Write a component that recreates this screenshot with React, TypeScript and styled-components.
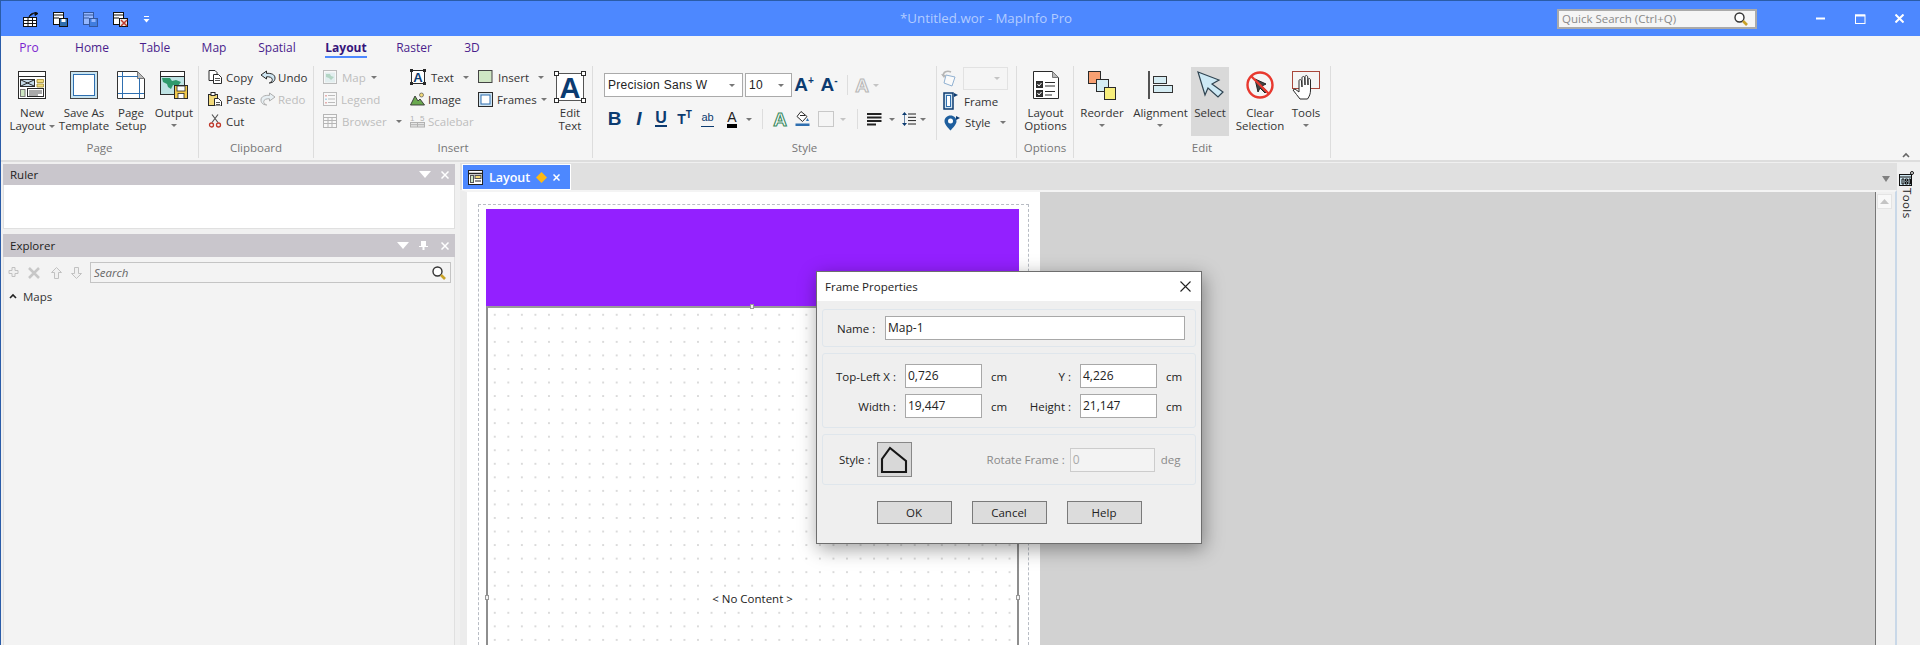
import React from "react";
import styled, { createGlobalStyle } from "styled-components";

const FONT = `"Open Sans", "Noto Sans", "Liberation Sans", sans-serif`;

const Global = createGlobalStyle`
  html, body { margin: 0; padding: 0; overflow: hidden; background: #f0f0f0; }
  #root { width: 1920px; height: 645px; }
  * { box-sizing: border-box; }
`;

const Shell = styled.div`
  position: relative; width: 1920px; height: 645px; overflow: hidden;
  display: flex; flex-direction: column; background: #f0f0f0;
  border-left: 1px solid #2a5ca8; border-top: 1px solid #2a5ca8;
  font: 11.5px/13px ${FONT}; color: #333;
`;

/* ---------- title bar ---------- */
const TitleBar = styled.div`
  height: 35px; flex: none; background: #4d88ff; display: flex; align-items: center; color: #fff;
`;
const Qat = styled.div`
  width: 899px; flex: none; display: flex; align-items: center; padding: 1px 0 0 22px; gap: 15px;
`;
const Title = styled.div`
  width: 172px; flex: none; text-align: center; color: #b3ccff; font-size: 13.3px; white-space: nowrap;
`;
const QuickSearch = styled.div`
  margin-left: 485px; width: 200px; height: 20px; border: 2px solid #aaa; background: #f5f5f5;
  display: flex; align-items: center; justify-content: space-between; padding: 0 7px 0 3px;
  color: #8a8a8a; font-size: 11.5px; white-space: nowrap;
`;
const WinControls = styled.div`
  margin-left: 59px; display: flex; align-items: center; gap: 29px;
`;

/* ---------- tabs ---------- */
const TabRow = styled.div`
  height: 24px; flex: none; background: #f5f5f5; display: flex; padding-top: 3px;
`;
const Tab = styled.div<{ $w: number }>`
  width: ${(p) => p.$w}px; display: flex; justify-content: center;
`;
const TabLabel = styled.span<{ $active?: boolean; $pro?: boolean }>`
  display: block; height: 19px; font-size: 12px; line-height: 17px;
  color: ${(p) => (p.$pro ? "#7a22cf" : p.$active ? "#35147a" : "#4a1d8c")};
  font-weight: ${(p) => (p.$active ? 700 : 400)};
  border-bottom: 2px solid ${(p) => (p.$active ? "#4d88ff" : "transparent")};
`;

/* ---------- ribbon ---------- */
const Ribbon = styled.div`
  height: 102px; flex: none; background: #f5f5f5; border-bottom: 2px solid #ddd; display: flex; align-items: flex-start; padding-top: 6px;
`;
const Group = styled.div<{ $w: number }>`
  width: ${(p) => p.$w}px; height: 92px; flex: none; border-right: 1px solid #ddd; display: flex; flex-direction: column;
`;
const GroupBody = styled.div<{ $pl?: number }>`
  height: 74px; display: flex; padding-left: ${(p) => p.$pl || 0}px;
`;
const GroupLabel = styled.div`
  height: 15px; line-height: 15px; text-align: center; color: #777; font-size: 11.5px;
`;
const Large = styled.div<{ $w: number; $on?: boolean }>`
  width: ${(p) => p.$w}px; height: 69px; margin-top: 1px; padding-top: 4px; flex: none;
  display: flex; flex-direction: column; align-items: center; text-align: center;
  background: ${(p) => (p.$on ? "#d9d9d9" : "transparent")};
  color: #333; white-space: nowrap;
`;
const IconSlot = styled.div`
  height: 30px; flex: none; display: flex; align-items: flex-start; justify-content: center;
`;
const LargeText = styled.div`
  margin-top: 5px; line-height: 13px;
`;
const Caret = styled.span<{ $ml?: number; $light?: boolean }>`
  display: inline-block; flex: none; width: 0; height: 0; vertical-align: middle;
  margin-left: ${(p) => p.$ml || 0}px;
  border-left: 3px solid transparent; border-right: 3px solid transparent;
  border-top: 3px solid ${(p) => (p.$light ? "#c4c4c4" : "#777")};
`;
const CaretLine = styled.div`
  height: 13px; display: flex; align-items: center; justify-content: center;
`;
const SmallCol = styled.div<{ $w: number }>`
  width: ${(p) => p.$w}px; flex: none;
`;
const SmallRow = styled.div<{ $off?: boolean; $gap?: number; $pl?: number; $h?: number }>`
  height: ${(p) => p.$h || 22}px; display: flex; align-items: center; gap: ${(p) => (p.$gap === undefined ? 4 : p.$gap)}px; white-space: nowrap;
  padding-left: ${(p) => p.$pl || 0}px;
  color: ${(p) => (p.$off ? "#bdbdbd" : "#333")};
`;
const StyleLeft = styled.div`
  width: 344px; height: 74px; flex: none; padding-top: 7px; border-right: 1px solid #ddd;
`;
const StyleRight = styled.div`
  flex: 1; padding: 1px 0 0 4px;
`;
const ToolRow = styled.div<{ $pl: number; $h: number; $mt?: number }>`
  display: flex; align-items: center; height: ${(p) => p.$h}px; padding-left: ${(p) => p.$pl}px; margin-top: ${(p) => p.$mt || 0}px;
`;
const Combo = styled.div<{ $w: number; $ml?: number; $off?: boolean }>`
  width: ${(p) => p.$w}px; height: ${(p) => (p.$off ? 23 : 24)}px; flex: none; margin-left: ${(p) => p.$ml || 0}px;
  border: 1px solid ${(p) => (p.$off ? "#e2e2e2" : "#aaa")}; background: ${(p) => (p.$off ? "#f5f5f5" : "#fff")};
  display: flex; align-items: center; justify-content: space-between; padding: 0 7px 0 3px; font: 12px "Liberation Sans", sans-serif; letter-spacing: .3px; color: #222;
`;
const Glyph = styled.span<{ $w: number; $ml?: number; $size?: number; $color?: string; $bold?: boolean; $italic?: boolean }>`
  width: ${(p) => p.$w}px; margin-left: ${(p) => p.$ml || 0}px; flex: none; text-align: center; display: inline-flex; align-items: center; justify-content: center;
  font-family: "Liberation Sans", sans-serif;
  font-size: ${(p) => p.$size || 14}px; line-height: 20px;
  color: ${(p) => p.$color || "#0c3b70"};
  font-weight: ${(p) => (p.$bold ? 700 : 400)}; font-style: ${(p) => (p.$italic ? "italic" : "normal")};
`;
const Sup = styled.span`
  font-size: 10px; font-weight: 700; position: relative; top: -4px;
`;
const Under = styled.span`
  border-bottom: 2px solid #0c3b70; line-height: 14px; font-weight: 700;
`;
const UnderThin = styled.span`
  border-bottom: 1px solid #0c3b70; line-height: 13px; padding-bottom: 2px; font-weight: 400;
`;
const BlackBar = styled.span`
  border-bottom: 4px solid #000; line-height: 13px;
`;
const VSep = styled.span<{ $ml: number }>`
  width: 1px; height: 20px; background: #ddd; flex: none; margin-left: ${(p) => p.$ml}px;
`;
const ColorSwatch = styled.span<{ $ml: number }>`
  width: 16px; height: 16px; flex: none; margin-left: ${(p) => p.$ml}px; border: 1px solid #c8c8c8; background: #f5f5f5;
`;
const Collapse = styled.div`
  margin: 81px 0 0 auto; padding-right: 10px;
`;

/* ---------- main ---------- */
const Main = styled.div`
  flex: 1; min-height: 0; display: flex; background: #f0f0f0;
`;
const Left = styled.div`
  width: 452px; margin-left: 2px; flex: none; display: flex; flex-direction: column; padding-top: 2px;
`;
const PaneHead = styled.div<{ $h: number }>`
  height: ${(p) => p.$h}px; flex: none; background: #c9c6cc; display: flex; align-items: center; padding: 0 6px 0 7px; color: #222;
`;
const PaneTitle = styled.span`
  flex: 1;
`;
const PaneBtns = styled.div`
  display: flex; align-items: center; gap: 10px;
`;
const PinSlot = styled.span`
  display: flex; margin: 0 3px 0 0;
`;
const RulerBody = styled.div`
  height: 44px; flex: none; background: #fff; border: 1px solid #e0e0e0; border-top: 0; margin-bottom: 5px;
`;
const ExplorerBody = styled.div`
  flex: 1; background: #f3f3f3; border-left: 1px solid #e0e0e0; border-right: 1px solid #e0e0e0;
`;
const ExplorerBar = styled.div`
  display: flex; align-items: center; height: 19px; margin-top: 6px; padding-left: 4px; gap: 9px;
`;
const UpSlot = styled.span`
  display: flex; margin-left: 2px;
`;
const SearchBox = styled.div`
  margin-left: -1px; width: 361px; height: 21px; border: 1px solid #c4c4c4; background: #f3f3f3; display: flex; align-items: center; justify-content: space-between;
  padding: 0 4px 0 3px; font-style: italic; color: #666;
`;
const TreeRow = styled.div`
  display: flex; align-items: center; gap: 6px; padding: 3px 0 0 5px; height: 25px; color: #333;
`;
const Doc = styled.div`
  width: 1437px; margin-left: 5px; flex: none; display: flex; flex-direction: column; padding-top: 1px;
`;
const DocTabs = styled.div`
  height: 27px; flex: none; background: #e0e0e0; display: flex; align-items: flex-end; padding-left: 3px; padding-bottom: 1px;
  justify-content: space-between; padding-right: 7px;
`;
const DocTab = styled.div`
  width: 107px; height: 24px; background: #4d88ff; box-shadow: 0 0 0 1px #fff; color: #fff; display: flex; align-items: center; padding-left: 5px; gap: 6px; font-size: 12.5px; font-weight: 600;
`;
const DocArrow = styled.div`
  width: 0; height: 0; margin-bottom: 7px; border-left: 4px solid transparent; border-right: 4px solid transparent; border-top: 6px solid #808080;
`;
const DocBody = styled.div`
  flex: 1; min-height: 0; display: flex; border-top: 2px solid #f4f4f4; border-left: 7px solid #ececec; border-right: 2px solid #c9d8e8;
`;
const Paper = styled.div`
  width: 573px; flex: none; background: #fff; padding: 12px 11px 0; display: flex; overflow: hidden;
`;
const Margin = styled.div`
  flex: 1; display: flex; flex-direction: column; border: 1px dashed #b8bcc4; border-bottom: 0; padding: 4px 9px 0 7px;
`;
const Banner = styled.div`
  height: 97px; flex: none; background: #9320ff;
`;
const MapFrame = styled.div`
  position: relative; flex: 1; border-left: 2px solid #8e8e8e; border-right: 2px solid #8e8e8e; border-top: 2px solid #9a9a9a;
  background-color: #fff;
  background-image: radial-gradient(circle at center, #dadada 0, #dadada 0.7px, transparent 1px);
  background-size: 13.55px 13.55px; background-position: 0 0;
  padding-top: 284px; text-align: center; font-size: 11.5px; color: #222;
`;
const Handle = styled.span<{ $x: string; $y: string }>`
  position: absolute; width: 4px; height: 5px; background: #f4f4f4; border: 1px solid #999; left: ${(p) => p.$x}; top: ${(p) => p.$y};
`;
const NoContent = styled.span`
  background: #fff; padding: 0 2px;
`;
const Canvas = styled.div`
  flex: 1; background: #d2d2d2;
`;
const ScrollBar = styled.div`
  width: 20px; flex: none; background: #f0f0f0; border-left: 1px solid #777; padding: 2px 2px 0 1px;
`;
const ScrollUp = styled.div`
  width: 15px; height: 15px; background: #f8f8f8; border: 1px solid #e4e4e4; display: flex; align-items: center; justify-content: center;
`;
const ToolStrip = styled.div`
  flex: 1; background: #f0f0f0; display: flex; flex-direction: column; align-items: center; padding: 9px 4px 0 0; color: #222;
`;
const VerticalText = styled.div`
  writing-mode: vertical-rl; margin-top: 2px; line-height: 14px; letter-spacing: .4px;
`;

/* ---------- dialog ---------- */
const Dialog = styled.div`
  position: absolute; left: 815px; top: 270px; width: 386px; height: 273px; background: #efefef; border: 1px solid #6e6e6e;
  box-shadow: 2px 5px 18px rgba(0, 0, 0, .38); display: flex; flex-direction: column; color: #222; font-size: 11.5px;
`;
const DialogTitle = styled.div`
  height: 29px; flex: none; background: #fff; display: flex; align-items: center; justify-content: space-between; padding: 0 10px 0 8px; color: #222; font-size: 11.5px; font-weight: 500;
`;
const DialogBody = styled.div`
  flex: 1; padding: 8px 5px 0; display: flex; flex-direction: column; gap: 6px;
`;
const Box = styled.div<{ $h: number }>`
  height: ${(p) => p.$h}px; flex: none; border: 1px solid #dfe6ec; border-radius: 3px;
`;
const NameRow = styled.div`
  display: flex; align-items: center; height: 100%; padding-left: 14px; gap: 10px;
`;
const Label = styled.label<{ $w?: number; $off?: boolean; $ml?: number }>`
  width: ${(p) => (p.$w ? `${p.$w}px` : "auto")}; flex: none; text-align: right; white-space: nowrap;
  margin-left: ${(p) => p.$ml || 0}px;
  color: ${(p) => (p.$off ? "#8a8a8a" : "#222")};
`;
const Field = styled.div<{ $w: number; $off?: boolean; $ml?: number }>`
  width: ${(p) => p.$w}px; height: 24px; flex: none; border: 1px solid ${(p) => (p.$off ? "#ccc" : "#a8a8a8")};
  margin-left: ${(p) => p.$ml || 0}px;
  background: ${(p) => (p.$off ? "#f3f3f3" : "#fff")}; color: ${(p) => (p.$off ? "#aaa" : "#222")};
  padding-left: 2px; line-height: 22px; font-size: 12px;
`;
const DimGrid = styled.div`
  display: grid; grid-template-columns: 73px 77px 22px 49px 77px 22px; grid-auto-rows: 24px; column-gap: 9px; row-gap: 6px; padding-top: 10px; align-items: center;
`;
const StyleBoxRow = styled.div`
  display: flex; align-items: center; height: 100%; padding-left: 16px;
`;
const StyleBtn = styled.div`
  width: 35px; height: 35px; margin-left: 6px; flex: none; border: 1px solid #888; background: #d8d8d8; display: flex; align-items: center; justify-content: center;
`;
const Unit = styled.span<{ $off?: boolean; $ml?: number }>`
  margin-left: ${(p) => p.$ml || 0}px;
  color: ${(p) => (p.$off ? "#8a8a8a" : "#222")}; white-space: nowrap;
`;
const ButtonRow = styled.div`
  display: flex; justify-content: center; gap: 20px; margin-top: 10px;
`;
const DlgButton = styled.button`
  width: 75px; height: 23px; padding: 0; border: 1px solid #7a7a7a; background: #dcdcdc; color: #222; font: 11.5px ${FONT};
`;

/* ---------- icons ---------- */
type P = { children: React.ReactNode; w?: number; h?: number; o?: number };
const S = ({ children, w = 14, h = 14, o = 1 }: P) => (
  <svg width={w} height={h} viewBox={`0 0 ${w} ${h}`} style={o < 1 ? { opacity: o } : undefined} fill="none">
    {children}
  </svg>
);
const K = "#2a2a2a";
const BL = "#2f6fb0";

const IconNewLayout = () => (
  <S w={28} h={28}>
    <rect x=".5" y=".5" width="27" height="27" fill="#fff" stroke={K} />
    <path d="M1 5.500h26" stroke={K} />
    <rect x="2.500" y="8.500" width="14" height="7" fill="#c6dbe8" stroke={K} />
    <path d="M3 9l13 6M16 9L3 15" stroke={K} />
    <path d="M19 8.500h6.500v3H19zM19 13h6.500v3H19z" fill="#f3dc7c" stroke="#a08a30" strokeWidth=".8" />
    <rect x="2.500" y="18.500" width="4.500" height="7" fill="#cfe6c2" stroke="#777" />
    <rect x="9.500" y="17.500" width="16" height="8" fill="#fff" stroke={K} />
    <path d="M11 20h13M11 22h13M11 24h9" stroke={K} strokeWidth=".8" />
  </S>
);
const IconSaveTpl = () => (
  <S w={28} h={28}>
    <rect x=".5" y=".5" width="27" height="27" fill="#c9e4f0" stroke="#444" />
    <rect x="3.500" y="3.500" width="21" height="21" fill="#fff" stroke={BL} />
  </S>
);
const IconPageSetup = () => (
  <S w={28} h={28}>
    <path d="M.5.5h20l7 7v20H.5z" fill="#fff" stroke="#333" />
    <path d="M20.500.5v7h7z" fill="#bbb" stroke="#777" />
    <path d="M5.500 1v26M22.500 7v20M1 5.500h20M1 22.500h26" stroke={BL} />
  </S>
);
const IconOutput = () => (
  <S w={28} h={28}>
    <rect x=".5" y=".5" width="24" height="23" fill="#fff" stroke={K} />
    <path d="M1 5.500h23" stroke={K} />
    <rect x="1" y="6" width="23" height="17" fill="#bfe3e4" />
    <path d="M2 7h8l2 3 4-1 5 2-3 4-5-1-2 4-3-2-1-3-4-2zM19 17l4 1v3h-5z" fill="#2f9a6c" />
    <rect x="14.500" y="14.500" width="13" height="13" fill="#f2c94c" stroke={K} />
    <rect x="17" y="15" width="8" height="5" fill="#fff" stroke={K} strokeWidth=".8" />
    <rect x="18" y="22.500" width="6" height="5" fill="#fff" stroke={K} strokeWidth=".8" />
  </S>
);
const IconCopy = () => (
  <S>
    <path d="M1 .5h6l2 2v8H1z" fill="#fff" stroke={K} />
    <path d="M5.500 4.500h5l3 3v6h-8z" fill="#fff" stroke={K} />
    <path d="M7 8.500h5M7 10.500h5" stroke={K} strokeWidth=".8" />
  </S>
);
const IconPaste = () => (
  <S>
    <rect x=".5" y="2.500" width="9" height="11" fill="#f2d97a" stroke={K} />
    <rect x="3" y=".5" width="4" height="3" fill="#fff" stroke={K} />
    <path d="M6.500 6.500h4l3 3v4.500h-7z" fill="#fff" stroke={K} />
    <path d="M8 10.500h4M8 12.500h4" stroke={K} strokeWidth=".8" />
  </S>
);
const IconCut = () => (
  <S>
    <path d="M4 8.500L10 .5M10 8.500L4 .5" stroke="#555" strokeWidth="1.200" />
    <circle cx="3.500" cy="11" r="2" stroke="#c0392b" strokeWidth="1.300" />
    <circle cx="10.500" cy="11" r="2" stroke="#c0392b" strokeWidth="1.300" />
  </S>
);
const IconUndo = ({ off }: { off?: boolean }) => (
  <svg width="16" height="14" viewBox="0 0 16 14" fill="none" style={off ? { opacity: 0.35, transform: "scaleX(-1)" } : undefined}>
    <path d="M6.500 1L1 5l5.500 4V6.800c3-.3 5.800.7 5.800 2.900 0 1.300-1 2.300-3 3.300 4.500-.3 5.700-2.800 5.700-5 0-3.600-4-5-8.500-4.600z" fill="#cfe6f2" stroke={K} />
  </svg>
);
const IconMapSmall = () => (
  <S o={0.35}>
    <rect x=".5" y=".5" width="13" height="13" fill="#fff" stroke="#555" />
    <rect x="2" y="2.500" width="10" height="10" fill="#bfe3e4" />
    <path d="M3 4h4l1 2 3 1-3 3-2-2-3-1z" fill="#3a9a6c" />
  </S>
);
const IconLegend = () => (
  <S o={0.35}>
    <rect x=".5" y=".5" width="13" height="13" fill="#fff" stroke="#555" />
    <path d="M5 3.500h7M5 7h7M5 10.500h7" stroke="#555" />
    <path d="M2 3h2v1.500H2z" fill="#c33" /><path d="M2 6.500h2V8H2z" fill="#39c" /><path d="M2 10h2v1.500H2z" fill="#c33" />
  </S>
);
const IconBrowser = () => (
  <S o={0.35}>
    <rect x=".5" y=".5" width="13" height="13" fill="#fff" stroke="#444" />
    <path d="M1 3.500h12M1 6.500h12M1 9.500h12M5 3.500v10M9 3.500v10" stroke="#444" />
  </S>
);
const IconTextBox = () => (
  <S w={16} h={16}>
    <rect x="1.500" y="1.500" width="13" height="13" fill="#fff" stroke={K} />
    <rect x="0" y="0" width="3" height="3" fill={K} /><rect x="13" y="0" width="3" height="3" fill={K} />
    <rect x="0" y="13" width="3" height="3" fill={K} /><rect x="13" y="13" width="3" height="3" fill={K} />
    <text x="8" y="12.500" fontFamily="Liberation Sans" fontSize="13" fontWeight="700" textAnchor="middle" fill="#0c3b70">A</text>
  </S>
);
const IconImage = () => (
  <S w={15} h={14}>
    <circle cx="11.500" cy="3" r="2" fill="#f2d97a" stroke="#555" strokeWidth=".7" />
    <path d="M.5 13L5 4l3 5 2-2 4.500 6z" fill="#6aa84f" stroke="#333" strokeWidth=".9" />
  </S>
);
const IconScalebar = () => (
  <svg width="15" height="14" viewBox="0 0 15 14" fill="none" style={{ opacity: 0.38 }}>
    <text x="0" y="7" fontFamily="Liberation Sans" fontSize="8" fill="#444">1</text>
    <text x="10" y="7" fontFamily="Liberation Sans" fontSize="8" fill="#444">5</text>
    <rect x=".5" y="8.500" width="14" height="4.500" fill="#ccc" stroke="#444" />
    <path d="M7.500 8.500V13M1 10.700h13" stroke="#444" />
  </svg>
);
const IconInsertBox = () => (
  <S w={15} h={14}>
    <rect x=".5" y=".5" width="13.500" height="12" fill="#cfe6c4" stroke="#444" />
  </S>
);
const IconFrames = () => (
  <S w={15} h={15}>
    <rect x=".5" y=".5" width="14" height="14" fill="#cfe3f0" stroke={K} />
    <rect x="3" y="3" width="9" height="9" fill="#fff" stroke={BL} />
  </S>
);
const IconEditText = () => (
  <S w={32} h={34}>
    <rect x="2.500" y="2.500" width="27" height="27" fill="#fff" stroke="#555" />
    <rect x=".5" y=".5" width="4" height="4" fill="#fff" stroke={K} /><rect x="27.500" y=".5" width="4" height="4" fill="#fff" stroke={K} />
    <rect x=".5" y="27.500" width="4" height="4" fill="#fff" stroke={K} /><rect x="27.500" y="27.500" width="4" height="4" fill="#fff" stroke={K} />
    <text x="16" y="27" fontFamily="Liberation Sans" fontSize="29" fontWeight="700" textAnchor="middle" fill="#0c3b70">A</text>
  </S>
);
const IconTextEffect = ({ c, fill }: { c: string; fill: string }) => (
  <S w={16} h={23}>
    <text x="8" y="18" fontFamily="Liberation Sans" fontSize="19" fontWeight="700" textAnchor="middle" fill={fill} stroke={c} strokeWidth="1.100">A</text>
  </S>
);
const IconFill = () => (
  <S w={15} h={16}>
    <path d="M6 .5l6 5-4.500 5L2 5.500z" fill="#fff" stroke={K} />
    <path d="M5 4.500h5" stroke={K} />
    <path d="M12.500 7l1.500 3h-3z" fill={BL} />
    <rect x=".5" y="12.500" width="14" height="2.500" fill={BL} />
  </S>
);
const IconAlign = () => (
  <S w={15} h={15}>
    <path d="M0 2h14.500M0 5.500h14.500M0 9h14.500M0 12.500h9" stroke="#222" strokeWidth="2" />
  </S>
);
const IconSpacing = () => (
  <S w={14} h={16}>
    <path d="M2.500 1l2.500 3H0zM2.500 15L5 12H0z" fill="#0c3b70" />
    <path d="M2.500 4v8" stroke="#0c3b70" strokeWidth=".6" />
    <path d="M6 3h8M6 6.300h8M6 9.600h8M6 13h8" stroke="#222" />
  </S>
);
const IconRotate = () => (
  <S w={16} h={18} o={0.5}>
    <path d="M5 5l9 2-3 9-8-3z" fill="#fff" stroke={BL} />
    <path d="M2 6C2 2 6 0 10 2" stroke="#777" strokeWidth="1.400" />
    <path d="M0 4l3 4 2-3z" fill="#777" />
  </S>
);
const IconFrameSm = () => (
  <S w={15} h={18}>
    <rect x="1" y="1" width="9" height="16" fill="#cfe3f0" stroke="#0c3b70" strokeWidth="1.500" />
    <rect x="3.500" y="3.500" width="4" height="11" fill="#fff" stroke={BL} />
    <path d="M11 1l4 2-4 2z" fill="#0c3b70" />
  </S>
);
const IconPinStyle = () => (
  <S w={16} h={16}>
    <path d="M6.500.5C3 .5.500 3 .5 6.300c0 3 3.500 6.500 6 9.200 2.500-2.700 6-6.200 6-9.200C12.500 3 10 .5 6.500.5z" fill="#1f5f9e" />
    <circle cx="6.500" cy="6" r="2.500" fill="#fff" />
    <path d="M12 1l4 2-4 2z" fill="#0c3b70" />
  </S>
);
const IconLayoutOptions = () => (
  <S w={26} h={28}>
    <path d="M.5.5h19l6 6v21H.5z" fill="#fff" stroke={K} />
    <path d="M19.500.5v6h6z" fill="#bbb" stroke="#777" />
    <rect x="3.500" y="10.500" width="6" height="6" fill="#333" stroke={K} />
    <rect x="3.500" y="19.500" width="6" height="6" fill="#333" stroke={K} />
    <path d="M4.500 13l1.500 2 2.500-3M4.500 22l1.500 2 2.500-3" stroke="#fff" />
    <path d="M12 11.500h10M12 15h10M12 20.500h10M12 24h7" stroke={K} />
  </S>
);
const IconReorder = () => (
  <S w={28} h={29}>
    <rect x=".5" y=".5" width="12" height="12" fill="#f7a072" stroke={K} />
    <rect x="8.500" y="8.500" width="12" height="12" fill="#d5ecf3" stroke={K} />
    <rect x="16.500" y="16.500" width="11" height="12" fill="#f7ee7c" stroke={K} />
  </S>
);
const IconAlignment = () => (
  <S w={25} h={30}>
    <path d="M1 0v28" stroke={K} strokeWidth="1.600" />
    <rect x="5.500" y="5.500" width="13" height="7" fill="#d5ecf3" stroke="#333" />
    <rect x="5.500" y="14.500" width="19" height="7" fill="#d5ecf3" stroke="#333" />
  </S>
);
const IconArrow = () => (
  <S w={27} h={27}>
    <path d="M1 1l21 8-7 4 11 8-5 5-10-9-3 7z" fill="#cde9f5" stroke="#2f4350" strokeWidth="1.200" />
  </S>
);
const IconClear = () => (
  <S w={28} h={28}>
    <path d="M9 8l3 13 2-4 5 5 2-2-5-5 4-2z" fill="#444" stroke="#222" />
    <circle cx="14" cy="14" r="12.500" stroke="#e8392f" strokeWidth="2.400" />
    <path d="M5 5l18 18" stroke="#e8392f" strokeWidth="2.400" />
  </S>
);
const IconHand = () => (
  <S w={28} h={29}>
    <rect x=".5" y=".5" width="27" height="17" stroke="#a8473b" />
    <path d="M8 28c-2-3-5-6-7-9l2-1 4 3 0-11c0-2 2-2 2.500 0l.5 6V7c0-2 2.500-2 2.700 0l.3 7V6c0-2 2.500-2 2.700 0l.3 8V9c0-2 2.300-2 2.500 0v10c0 4-1 6-3 9z" fill="#fff" stroke={K} />
  </S>
);
const IconGlass = () => (
  <S>
    <circle cx="5.500" cy="5.500" r="4.500" fill="#fff" stroke="#333" strokeWidth="1.400" />
    <path d="M9 9l4 4" stroke="#c9a227" strokeWidth="2.600" />
  </S>
);
const IconQ = ({ o = 1, k = 0 }: { o?: number; k?: number }) => (
  <S w={15} h={15} o={o}>
    {k === 0 ? (
      <>
        <rect x=".5" y="5.500" width="13" height="9" fill="#fff" stroke="#111" />
        <path d="M1 8.500h13M1 11.500h13M5 6v9M9.500 6v9" stroke="#111" />
        <path d="M6 5c1-3 3-4 6-4M12 0l3 1.500L12 3.500z" stroke="#111" fill="#111" />
      </>
    ) : (
      <>
        <rect x=".5" y=".5" width="10" height="12" fill="#fff" stroke="#111" />
        <path d="M1 3h9M1 6h5" stroke="#111" />
        <rect x="6.500" y="6.500" width="8" height="8" fill={k === 1 ? "#2f6fb0" : "#e9e9e9"} stroke="#111" />
        {k === 2 ? <path d="M8 8l6 6M14 8l-6 6" stroke="#c0392b" strokeWidth="1.500" /> : <rect x="8.500" y="7" width="4" height="3" fill="#fff" />}
      </>
    )}
  </S>
);
const IconWinMin = () => (
  <S w={10} h={3}><path d="M0 1.500h9" stroke="#fff" strokeWidth="2" /></S>
);
const IconWinMax = () => (
  <S w={11} h={10}><rect x=".5" y="1" width="9.500" height="8.500" stroke="#fff" /><path d="M0 1.500h10" stroke="#fff" strokeWidth="2" /></S>
);
const IconX = ({ s = 9, c = "#fff", w = 2 }: { s?: number; c?: string; w?: number }) => (
  <S w={s} h={s}><path d={`M.5.5L${s - 0.5} ${s - 0.5}M${s - 0.5} .5L.5 ${s - 0.5}`} stroke={c} strokeWidth={w} /></S>
);
const IconDown = () => (
  <S w={12} h={7}><path d="M0 0h12L6 7z" fill="#fff" /></S>
);
const IconPin = () => (
  <S w={9} h={9}><path d="M2 0h5v5h2v1H5.500v3h-2V6H0V5h2z" fill="#fff" /></S>
);
const IconPlus = () => (
  <S w={11} h={11} o={0.4}><path d="M4 .5h3v3h3v3H7v3H4v-3H1v-3h3z" fill="#eee" stroke="#777" /></S>
);
const IconXg = () => (
  <S w={12} h={12} o={0.35}><path d="M1 1l10 10M11 1L1 11" stroke="#777" strokeWidth="2.500" /></S>
);
const IconUp = ({ flip }: { flip?: boolean }) => (
  <svg width="11" height="12" viewBox="0 0 11 12" style={{ opacity: 0.4, transform: flip ? "scaleY(-1)" : undefined }} fill="none">
    <path d="M5.500.5l5 5H7.500v6h-4v-6H.5z" fill="#eee" stroke="#777" />
  </svg>
);
const IconChevron = ({ c = "#222" }: { c?: string }) => (
  <S w={8} h={6}><path d="M1 5l3-3 3 3" stroke={c} strokeWidth="1.600" /></S>
);
const IconTabLayout = () => (
  <S w={15} h={15}>
    <rect x=".5" y=".5" width="14" height="14" fill="#fff" stroke="#222" />
    <path d="M1 3.500h13" stroke="#222" strokeWidth="1.500" />
    <rect x="2.500" y="5.500" width="3" height="7" fill="#cfe6c4" stroke="#555" />
    <rect x="7" y="5.500" width="6" height="3" fill="#f2d97a" stroke="#555" />
    <path d="M7 11h6" stroke="#222" />
  </S>
);
const IconDiamond = () => (
  <S w={11} h={11}><path d="M5.500 0L11 5.500 5.500 11 0 5.500z" fill="#fdb813" /></S>
);
const IconStyleHouse = () => (
  <S w={28} h={29}>
    <path d="M2 27V14L10 3l16 13v11z" fill="#d8d8d8" stroke="#161616" strokeWidth="2.100" />
  </S>
);
const IconTools = () => (
  <S w={15} h={15}>
    <rect x=".5" y="3.500" width="12" height="11" fill="#cfe8f2" stroke="#111" />
    <path d="M1 6h11M3 8h2v5H3zM6.500 8h2v2h-2zM6.500 11h2v2h-2zM10 8h1.500v5H10z" stroke="#111" />
    <circle cx="13" cy="2" r="1.500" stroke="#111" />
  </S>
);

const LargeBtn = ({ w, icon, lines, caret, on }: { w: number; icon: React.ReactNode; lines: React.ReactNode[]; caret?: boolean; on?: boolean }) => (
  <Large $w={w} $on={on}>
    <IconSlot>{icon}</IconSlot>
    <LargeText>
      {lines.map((l, i) => (
        <div key={i}>{l}</div>
      ))}
      {caret && (
        <CaretLine>
          <Caret />
        </CaretLine>
      )}
    </LargeText>
  </Large>
);

export default function App() {
  return (
    <Shell>
      <Global />
      <TitleBar>
        <Qat>
          <IconQ k={0} />
          <IconQ k={1} />
          <IconQ k={1} o={0.4} />
          <IconQ k={2} />
          <S w={7} h={8}>
            <path d="M1 1.500h5" stroke="#fff" />
            <path d="M.5 4h6L3.500 7.500z" fill="#fff" />
          </S>
        </Qat>
        <Title>*Untitled.wor - MapInfo Pro</Title>
        <QuickSearch>
          Quick Search (Ctrl+Q)
          <IconGlass />
        </QuickSearch>
        <WinControls>
          <IconWinMin />
          <IconWinMax />
          <IconX />
        </WinControls>
      </TitleBar>

      <TabRow>
        {[
          ["Pro", 56],
          ["Home", 70],
          ["Table", 56],
          ["Map", 62],
          ["Spatial", 64],
          ["Layout", 74],
          ["Raster", 62],
          ["3D", 54],
        ].map(([t, w]) => (
          <Tab key={t as string} $w={w as number}>
            <TabLabel $active={t === "Layout"} $pro={t === "Pro"}>
              {t}
            </TabLabel>
          </Tab>
        ))}
      </TabRow>

      <Ribbon>
        <Group $w={198}>
          <GroupBody $pl={7}>
            <LargeBtn w={48} icon={<IconNewLayout />} lines={["New", <>Layout <Caret /></>]} />
            <LargeBtn w={56} icon={<IconSaveTpl />} lines={["Save As", "Template"]} />
            <LargeBtn w={38} icon={<IconPageSetup />} lines={["Page", "Setup"]} />
            <LargeBtn w={48} icon={<IconOutput />} lines={["Output"]} caret />
          </GroupBody>
          <GroupLabel>Page</GroupLabel>
        </Group>
        <Group $w={115}>
          <GroupBody $pl={9}>
            <SmallCol $w={52}>
              <SmallRow><IconCopy />Copy</SmallRow>
              <SmallRow><IconPaste />Paste</SmallRow>
              <SmallRow><IconCut />Cut</SmallRow>
            </SmallCol>
            <SmallCol $w={50}>
              <SmallRow $gap={2}><IconUndo />Undo</SmallRow>
              <SmallRow $off $gap={2}><IconUndo off />Redo</SmallRow>
            </SmallCol>
          </GroupBody>
          <GroupLabel>Clipboard</GroupLabel>
        </Group>
        <Group $w={279}>
          <GroupBody $pl={9}>
            <SmallCol $w={87}>
              <SmallRow $off $gap={5}><IconMapSmall />Map<Caret $ml={0} /></SmallRow>
              <SmallRow $off $gap={4}><IconLegend />Legend</SmallRow>
              <SmallRow $off $gap={5}><IconBrowser />Browser<Caret $ml={4} /></SmallRow>
            </SmallCol>
            <SmallCol $w={68}>
              <SmallRow $gap={5}><IconTextBox />Text<Caret $ml={4} /></SmallRow>
              <SmallRow $gap={3}><IconImage />Image</SmallRow>
              <SmallRow $off $gap={3}><IconScalebar />Scalebar</SmallRow>
            </SmallCol>
            <SmallCol $w={75}>
              <SmallRow $gap={5}><IconInsertBox />Insert<Caret $ml={4} /></SmallRow>
              <SmallRow $gap={4}><IconFrames />Frames<Caret $ml={0} /></SmallRow>
            </SmallCol>
            <LargeBtn w={34} icon={<IconEditText />} lines={["Edit", "Text"]} />
          </GroupBody>
          <GroupLabel>Insert</GroupLabel>
        </Group>
        <Group $w={424}>
          <GroupBody>
            <StyleLeft>
              <ToolRow $pl={11} $h={24}>
                <Combo $w={139}>Precision Sans W<Caret /></Combo>
                <Combo $w={47} $ml={2}>10<Caret /></Combo>
                <Glyph $w={16} $ml={4} $size={19} $bold>A<Sup>+</Sup></Glyph>
                <Glyph $w={16} $ml={9} $size={19} $bold>A<Sup>-</Sup></Glyph>
                <VSep $ml={10} />
                <Glyph $w={16} $ml={6}><IconTextEffect c="#b8b8b8" fill="#f5f5f5" /></Glyph>
                <Caret $ml={3} $light />
              </ToolRow>
              <ToolRow $pl={15} $h={22} $mt={11}>
                <Glyph $w={13} $size={19} $bold>B</Glyph>
                <Glyph $w={10} $ml={13} $size={19} $bold $italic>I</Glyph>
                <Glyph $w={14} $ml={10} $size={16}><Under>U</Under></Glyph>
                <Glyph $w={17} $ml={8} $size={14} $bold>T<Sup>T</Sup></Glyph>
                <Glyph $w={15} $ml={7} $size={11}><UnderThin>ab</UnderThin></Glyph>
                <Glyph $w={16} $ml={9} $size={14} $color="#222"><BlackBar>A</BlackBar></Glyph>
                <Caret $ml={6} />
                <VSep $ml={10} />
                <Glyph $w={16} $ml={9}><IconTextEffect c="#3a8a62" fill="#fff" /></Glyph>
                <Glyph $w={15} $ml={7}><IconFill /></Glyph>
                <ColorSwatch $ml={8} />
                <Caret $ml={6} $light />
                <VSep $ml={11} />
                <Glyph $w={15} $ml={9}><IconAlign /></Glyph>
                <Caret $ml={7} />
                <Glyph $w={14} $ml={7}><IconSpacing /></Glyph>
                <Caret $ml={4} />
              </ToolRow>
            </StyleLeft>
            <StyleRight>
              <ToolRow $pl={0} $h={23}>
                <IconRotate />
                <Combo $w={45} $ml={6} $off><span /><Caret $light /></Combo>
              </ToolRow>
              <SmallRow $gap={6} $pl={2}><IconFrameSm />Frame</SmallRow>
              <SmallRow $gap={5} $pl={3} $h={21}><IconPinStyle />Style<Caret $ml={4} /></SmallRow>
            </StyleRight>
          </GroupBody>
          <GroupLabel>Style</GroupLabel>
        </Group>
        <Group $w={57}>
          <GroupBody>
            <LargeBtn w={57} icon={<IconLayoutOptions />} lines={["Layout", "Options"]} />
          </GroupBody>
          <GroupLabel>Options</GroupLabel>
        </Group>
        <Group $w={257}>
          <GroupBody>
            <LargeBtn w={56} icon={<IconReorder />} lines={["Reorder"]} caret />
            <LargeBtn w={61} icon={<IconAlignment />} lines={["Alignment"]} caret />
            <LargeBtn w={38} on icon={<IconArrow />} lines={["Select"]} />
            <LargeBtn w={62} icon={<IconClear />} lines={["Clear", "Selection"]} />
            <LargeBtn w={30} icon={<IconHand />} lines={["Tools"]} caret />
          </GroupBody>
          <GroupLabel>Edit</GroupLabel>
        </Group>
        <Collapse>
          <IconChevron c="#666" />
        </Collapse>
      </Ribbon>

      <Main>
        <Left>
          <PaneHead $h={21}>
            <PaneTitle>Ruler</PaneTitle>
            <PaneBtns><IconDown /><IconX s={8} c="#fff" w={1.5} /></PaneBtns>
          </PaneHead>
          <RulerBody />
          <PaneHead $h={23}>
            <PaneTitle>Explorer</PaneTitle>
            <PaneBtns><IconDown /><PinSlot><IconPin /></PinSlot><IconX s={8} c="#fff" w={1.5} /></PaneBtns>
          </PaneHead>
          <ExplorerBody>
            <ExplorerBar>
              <IconPlus />
              <IconXg />
              <UpSlot><IconUp /></UpSlot>
              <IconUp flip />
              <SearchBox>Search<IconGlass /></SearchBox>
            </ExplorerBar>
            <TreeRow><IconChevron />Maps</TreeRow>
          </ExplorerBody>
        </Left>
        <Doc>
          <DocTabs>
            <DocTab>
              <IconTabLayout />
              <span>Layout</span>
              <IconDiamond />
              <IconX s={7} c="#fff" w={1.5} />
            </DocTab>
            <DocArrow />
          </DocTabs>
          <DocBody>
            <Paper>
              <Margin>
                <Banner />
                <MapFrame>
                  <Handle $x="calc(50% - 3px)" $y="-4px" />
                  <Handle $x="-3px" $y="287px" />
                  <Handle $x="calc(100% - 1px)" $y="287px" />
                  <NoContent>&lt; No Content &gt;</NoContent>
                </MapFrame>
              </Margin>
            </Paper>
            <Canvas />
            <ScrollBar>
              <ScrollUp>
                <S w={9} h={5}><path d="M4.500 0L9 5H0z" fill="#c4c4c4" /></S>
              </ScrollUp>
            </ScrollBar>
          </DocBody>
        </Doc>
        <ToolStrip>
          <IconTools />
          <VerticalText>Tools</VerticalText>
        </ToolStrip>
      </Main>

      <Dialog>
        <DialogTitle>
          Frame Properties
          <IconX s={11} c="#222" w={1.1} />
        </DialogTitle>
        <DialogBody>
          <Box $h={38}>
            <NameRow>
              <Label $w={38}>Name :</Label>
              <Field $w={300}>Map-1</Field>
            </NameRow>
          </Box>
          <Box $h={75}>
            <DimGrid>
              <Label>Top-Left X :</Label>
              <Field $w={77}>0,726</Field>
              <Unit>cm</Unit>
              <Label>Y :</Label>
              <Field $w={77}>4,226</Field>
              <Unit>cm</Unit>
              <Label>Width :</Label>
              <Field $w={77}>19,447</Field>
              <Unit>cm</Unit>
              <Label>Height :</Label>
              <Field $w={77}>21,147</Field>
              <Unit>cm</Unit>
            </DimGrid>
          </Box>
          <Box $h={51}>
            <StyleBoxRow>
              <Label>Style :</Label>
              <StyleBtn><IconStyleHouse /></StyleBtn>
              <Label $off $ml={75}>Rotate Frame :</Label>
              <Field $w={85} $off $ml={5}>0</Field>
              <Unit $off $ml={6}>deg</Unit>
            </StyleBoxRow>
          </Box>
          <ButtonRow>
            <DlgButton>OK</DlgButton>
            <DlgButton>Cancel</DlgButton>
            <DlgButton>Help</DlgButton>
          </ButtonRow>
        </DialogBody>
      </Dialog>
    </Shell>
  );
}
